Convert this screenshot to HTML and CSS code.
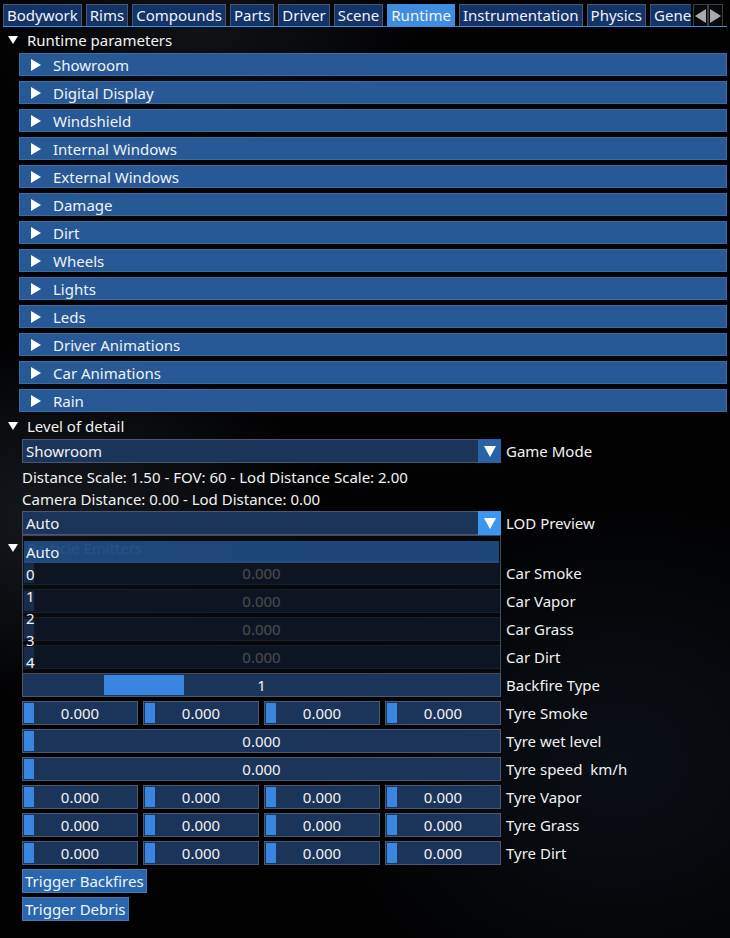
FILE: index.html
```html
<!DOCTYPE html>
<html lang="en">
<head>
    <meta charset="UTF-8">
    <title>Runtime</title>
    <link rel="stylesheet" href="styles.css">
</head>
<body>
    <!-- Tab bar -->
    <div class="tabbar">
        <div class="tabs">
            <span class="tab">Bodywork</span>
            <span class="tab">Rims</span>
            <span class="tab">Compounds</span>
            <span class="tab">Parts</span>
            <span class="tab">Driver</span>
            <span class="tab">Scene</span>
            <span class="tab active">Runtime</span>
            <span class="tab">Instrumentation</span>
            <span class="tab">Physics</span>
            <span class="tab">General</span>
        </div>
        <div class="tab-arrows">
            <span class="arrow-btn"><svg width="11" height="14" viewBox="0 0 11 14"><polygon points="11,0 11,14 0,7" fill="#a9a9ab"/></svg></span>
            <span class="arrow-btn"><svg width="11" height="14" viewBox="0 0 11 14"><polygon points="0,0 0,14 11,7" fill="#a9a9ab"/></svg></span>
        </div>
    </div>

    <!-- Runtime parameters -->
    <div class="node node-top">
        <svg class="caret" width="10" height="9" viewBox="0 0 10 9"><polygon points="0,0 10,0 5,8" fill="#fff"/></svg>
        Runtime parameters
    </div>
    <div class="headers">
        <div class="header"><svg class="caret-r" width="10" height="12" viewBox="0 0 10 12"><polygon points="0,0 10,6 0,12" fill="#fff"/></svg>Showroom</div>
        <div class="header"><svg class="caret-r" width="10" height="12" viewBox="0 0 10 12"><polygon points="0,0 10,6 0,12" fill="#fff"/></svg>Digital Display</div>
        <div class="header"><svg class="caret-r" width="10" height="12" viewBox="0 0 10 12"><polygon points="0,0 10,6 0,12" fill="#fff"/></svg>Windshield</div>
        <div class="header"><svg class="caret-r" width="10" height="12" viewBox="0 0 10 12"><polygon points="0,0 10,6 0,12" fill="#fff"/></svg>Internal Windows</div>
        <div class="header"><svg class="caret-r" width="10" height="12" viewBox="0 0 10 12"><polygon points="0,0 10,6 0,12" fill="#fff"/></svg>External Windows</div>
        <div class="header"><svg class="caret-r" width="10" height="12" viewBox="0 0 10 12"><polygon points="0,0 10,6 0,12" fill="#fff"/></svg>Damage</div>
        <div class="header"><svg class="caret-r" width="10" height="12" viewBox="0 0 10 12"><polygon points="0,0 10,6 0,12" fill="#fff"/></svg>Dirt</div>
        <div class="header"><svg class="caret-r" width="10" height="12" viewBox="0 0 10 12"><polygon points="0,0 10,6 0,12" fill="#fff"/></svg>Wheels</div>
        <div class="header"><svg class="caret-r" width="10" height="12" viewBox="0 0 10 12"><polygon points="0,0 10,6 0,12" fill="#fff"/></svg>Lights</div>
        <div class="header"><svg class="caret-r" width="10" height="12" viewBox="0 0 10 12"><polygon points="0,0 10,6 0,12" fill="#fff"/></svg>Leds</div>
        <div class="header"><svg class="caret-r" width="10" height="12" viewBox="0 0 10 12"><polygon points="0,0 10,6 0,12" fill="#fff"/></svg>Driver Animations</div>
        <div class="header"><svg class="caret-r" width="10" height="12" viewBox="0 0 10 12"><polygon points="0,0 10,6 0,12" fill="#fff"/></svg>Car Animations</div>
        <div class="header"><svg class="caret-r" width="10" height="12" viewBox="0 0 10 12"><polygon points="0,0 10,6 0,12" fill="#fff"/></svg>Rain</div>
    </div>

    <!-- Level of detail -->
    <div class="node node-lod">
        <svg class="caret" width="10" height="9" viewBox="0 0 10 9"><polygon points="0,0 10,0 5,8" fill="#fff"/></svg>
        Level of detail
    </div>
    <div class="section">
        <div class="row row-first">
            <div class="combo">
                <span class="combo-value">Showroom</span>
                <span class="combo-btn"><svg width="12" height="11" viewBox="0 0 12 11"><polygon points="0,0 12,0 6,11" fill="#fff"/></svg></span>
            </div>
            <span class="label">Game Mode</span>
        </div>
        <div class="text-line text-first">Distance Scale: 1.50 - FOV: 60 - Lod Distance Scale: 2.00</div>
        <div class="text-line">Camera Distance: 0.00 - Lod Distance: 0.00</div>
        <div class="row row-lod">
            <div class="combo combo-open">
                <span class="combo-value">Auto</span>
                <span class="combo-btn"><svg width="12" height="11" viewBox="0 0 12 11"><polygon points="0,0 12,0 6,11" fill="#fff"/></svg></span>
                <!-- open dropdown -->
                <div class="popup">
                    <div class="popup-item selected">Auto</div>
                    <div class="popup-item">0</div>
                    <div class="popup-item">1</div>
                    <div class="popup-item">2</div>
                    <div class="popup-item">3</div>
                    <div class="popup-item">4</div>
                </div>
            </div>
            <span class="label">LOD Preview</span>
        </div>
    </div>

    <!-- Particle Emitters -->
    <div class="node node-particle">
        <svg class="caret" width="10" height="9" viewBox="0 0 10 9"><polygon points="0,0 10,0 5,8" fill="#fff"/></svg>
        <span class="dim">Particle Emitters</span>
    </div>
    <div class="section sliders">
        <div class="row">
            <div class="slider wide"><span class="grab"></span>0.000</div>
            <span class="label">Car Smoke</span>
        </div>
        <div class="row">
            <div class="slider wide"><span class="grab"></span>0.000</div>
            <span class="label">Car Vapor</span>
        </div>
        <div class="row">
            <div class="slider wide"><span class="grab"></span>0.000</div>
            <span class="label">Car Grass</span>
        </div>
        <div class="row">
            <div class="slider wide"><span class="grab"></span>0.000</div>
            <span class="label">Car Dirt</span>
        </div>
        <div class="row">
            <div class="slider wide"><span class="grab big" style="left: 81px;"></span>1</div>
            <span class="label">Backfire Type</span>
        </div>
        <div class="row">
            <div class="quad">
                <div class="slider"><span class="grab"></span>0.000</div>
                <div class="slider"><span class="grab"></span>0.000</div>
                <div class="slider"><span class="grab"></span>0.000</div>
                <div class="slider"><span class="grab"></span>0.000</div>
            </div>
            <span class="label">Tyre Smoke</span>
        </div>
        <div class="row">
            <div class="slider wide"><span class="grab"></span>0.000</div>
            <span class="label">Tyre wet level</span>
        </div>
        <div class="row">
            <div class="slider wide"><span class="grab"></span>0.000</div>
            <span class="label">Tyre speed&nbsp; km/h</span>
        </div>
        <div class="row">
            <div class="quad">
                <div class="slider"><span class="grab"></span>0.000</div>
                <div class="slider"><span class="grab"></span>0.000</div>
                <div class="slider"><span class="grab"></span>0.000</div>
                <div class="slider"><span class="grab"></span>0.000</div>
            </div>
            <span class="label">Tyre Vapor</span>
        </div>
        <div class="row">
            <div class="quad">
                <div class="slider"><span class="grab"></span>0.000</div>
                <div class="slider"><span class="grab"></span>0.000</div>
                <div class="slider"><span class="grab"></span>0.000</div>
                <div class="slider"><span class="grab"></span>0.000</div>
            </div>
            <span class="label">Tyre Grass</span>
        </div>
        <div class="row">
            <div class="quad">
                <div class="slider"><span class="grab"></span>0.000</div>
                <div class="slider"><span class="grab"></span>0.000</div>
                <div class="slider"><span class="grab"></span>0.000</div>
                <div class="slider"><span class="grab"></span>0.000</div>
            </div>
            <span class="label">Tyre Dirt</span>
        </div>
        <div class="row"><span class="btn">Trigger Backfires</span></div>
        <div class="row"><span class="btn">Trigger Debris</span></div>
    </div>
</body>
</html>
```

FILE: styles.css
```css
* {
    box-sizing: border-box;
}
body {
    margin: 0;
    width: 730px;
    height: 938px;
    overflow: hidden;
    font-family: "Noto Sans", "Open Sans", sans-serif;
    font-size: 15px;
    color: #f2f2f2;
    background:
        radial-gradient(ellipse 260px 180px at 60px 520px, #15191f 0%, transparent 100%),
        radial-gradient(ellipse 300px 260px at 620px 760px, #0a0f16 0%, transparent 100%),
        radial-gradient(ellipse 220px 120px at 200px 30px, #101216 0%, transparent 100%),
        #020203;
}

/* tab bar */
.tabbar {
    display: flex;
    margin: 0 3px;
    padding-top: 4px;
    border-bottom: 1px solid #3d8ee0;
}
.tabs {
    display: flex;
    gap: 4px;
    width: 688px;
    overflow: hidden;
}
.tab {
    flex: none;
    height: 22px;
    line-height: 20px;
    padding: 0 3px;
    background: #123469;
    border: 1px solid #4a5670;
    border-bottom: none;
    white-space: nowrap;
}
.tab.active {
    background: #3d8ee0;
    border-color: #3d8ee0;
}
.tab-arrows {
    display: flex;
    margin-left: 2px;
}
.arrow-btn {
    width: 15px;
    height: 22px;
    display: flex;
    align-items: center;
    justify-content: center;
    border: 1px solid #3b3f47;
    border-bottom: none;
    background: #08090b;
}

/* tree nodes */
.node {
    display: flex;
    align-items: center;
    height: 22px;
    padding-left: 8px;
    white-space: nowrap;
}
.node .caret {
    margin-right: 9px;
}
.node-top {
    margin-top: 2px;
}
.node-lod {
    margin-top: 3px;
}
.node-particle {
    margin-top: 2px;
}
.dim {
    color: #7a9cc8;
}

/* collapsing headers */
.headers {
    display: flex;
    flex-direction: column;
    gap: 5px;
    margin: 2px 0 0 19px;
    width: 708px;
}
.header {
    display: flex;
    align-items: center;
    height: 23px;
    padding-left: 11px;
    background: #265996;
    border: 1px solid #3e6ca2;
}
.header .caret-r {
    margin-right: 12px;
}

/* level of detail section */
.section {
    padding-left: 22px;
}
.row {
    display: flex;
    align-items: center;
    gap: 5px;
    height: 24px;
}
.row-first {
    margin-top: 2px;
}
.row-lod {
    margin-top: 1px;
}
.text-line {
    height: 22px;
    line-height: 22px;
}
.text-first {
    margin-top: 3px;
}
.label {
    white-space: nowrap;
}
.combo {
    position: relative;
    display: flex;
    width: 479px;
    height: 24px;
    background: #1b345a;
    border: 1px solid #4b5670;
}
.combo-value {
    flex: 1;
    line-height: 22px;
    padding-left: 3px;
}
.combo-btn {
    width: 23px;
    display: flex;
    align-items: center;
    justify-content: center;
    background: #2a62a8;
    margin: -1px -1px -1px 0;
}
.combo-open .combo-btn {
    background: #3d95ee;
}

/* dropdown popup */
.popup {
    position: absolute;
    top: 23px;
    left: -1px;
    width: 479px;
    height: 139px;
    padding: 5px 1px 0;
    background: rgba(8, 10, 14, 0.72);
    border: 1px solid #434a58;
    z-index: 5;
}
.popup-item {
    height: 22px;
    line-height: 22px;
    padding-left: 2px;
}
.popup-item.selected {
    background: rgba(40, 96, 164, 0.72);
}

/* sliders */
.sliders {
    display: flex;
    flex-direction: column;
    gap: 4px;
    margin-top: 2px;
}
.slider {
    position: relative;
    flex: none;
    width: 116px;
    height: 24px;
    line-height: 22px;
    text-align: center;
    background: #1b345a;
    border: 1px solid #4b5870;
}
.slider.wide {
    width: 479px;
}
.grab {
    position: absolute;
    left: 1px;
    top: 1px;
    bottom: 1px;
    width: 10px;
    background: #3a85e0;
}
.grab.big {
    width: 80px;
}
.quad {
    display: flex;
    gap: 5px;
    width: 479px;
}
.btn {
    height: 24px;
    line-height: 22px;
    padding: 0 2px;
    background: #2866ad;
    border: 1px solid #4b78b0;
    white-space: nowrap;
}
```
